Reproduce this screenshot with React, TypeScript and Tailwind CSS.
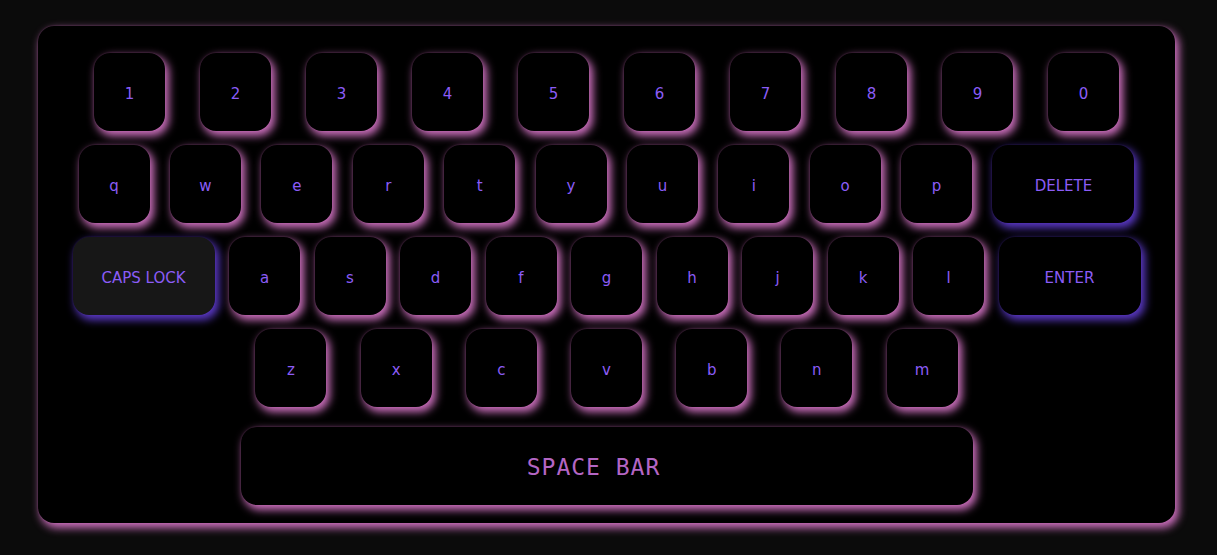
import React from 'react';

type KeyProps = {
  label: string;
  wide?: boolean;
  special?: boolean;
  active?: boolean;
};

function Key({ label, wide, special, active }: KeyProps) {
  return (
    <div
      className={[
        'flex h-[78px] shrink-0 items-center justify-center rounded-[16px] pt-[4px] text-[15px] text-[#8b5cf6]',
        wide ? 'w-[142px]' : 'w-[71px]',
        active ? 'bg-[#171717]' : 'bg-black',
        special
          ? 'shadow-[0_0_2px_rgba(90,60,200,0.25),3px_4px_8px_1px_rgb(92,58,200)]'
          : 'shadow-[0_0_2px_rgba(200,110,185,0.3),3px_4px_8px_1px_rgb(205,112,190)]',
      ].join(' ')}
      style={{ fontFamily: '"DejaVu Sans", Verdana, sans-serif' }}
    >
      {label}
    </div>
  );
}

const row1 = ['1', '2', '3', '4', '5', '6', '7', '8', '9', '0'];
const row2 = ['q', 'w', 'e', 'r', 't', 'y', 'u', 'i', 'o', 'p'];
const row3 = ['a', 's', 'd', 'f', 'g', 'h', 'j', 'k', 'l'];
const row4 = ['z', 'x', 'c', 'v', 'b', 'n', 'm'];

export default function App() {
  return (
    <div className="min-h-screen bg-[#0b0b0b] pl-[38px] pt-[26px]">
      <div className="flex h-[497px] w-[1137px] flex-col items-center rounded-[16px] bg-black pt-[27px] shadow-[0_0_2px_rgba(200,110,185,0.35),3px_4px_8px_1px_rgb(205,112,190)]">
        <div className="flex gap-[35px]">
          {row1.map((k) => (
            <Key key={k} label={k} />
          ))}
        </div>

        <div className="mt-[14px] flex gap-[20.4px]">
          {row2.map((k) => (
            <Key key={k} label={k} />
          ))}
          <Key label="DELETE" wide special />
        </div>

        <div className="mt-[14px] flex gap-[14.5px]">
          <Key label="CAPS LOCK" wide special active />
          {row3.map((k) => (
            <Key key={k} label={k} />
          ))}
          <Key label="ENTER" wide special />
        </div>

        <div className="mt-[14px] flex gap-[34.2px]">
          {row4.map((k) => (
            <Key key={k} label={k} />
          ))}
        </div>

        <div
          className="mt-[20px] flex h-[78px] w-[732px] items-center justify-center rounded-[16px] bg-black pr-[26px] pt-[2px] text-[23px] tracking-[1px] text-[#b466c4] shadow-[0_0_2px_rgba(200,110,185,0.3),3px_4px_8px_1px_rgb(205,112,190)]"
          style={{ fontFamily: '"DejaVu Sans Mono", monospace' }}
        >
          SPACE BAR
        </div>
      </div>
    </div>
  );
}
